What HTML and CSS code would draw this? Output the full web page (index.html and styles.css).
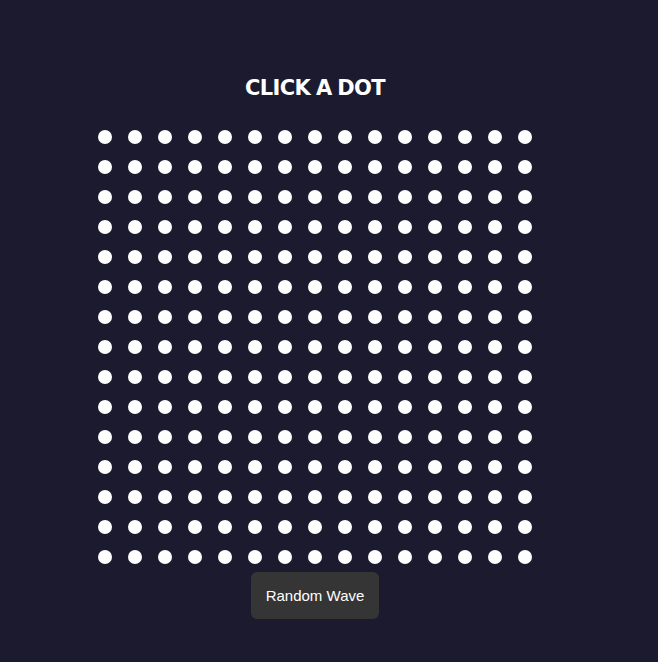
FILE: index.html
```html
<!DOCTYPE html>
<html>
<head>
<meta charset="utf-8">
<link rel="stylesheet" href="styles.css">
</head>
<body>
<main class="app">
<h1 class="title">CLICK A DOT</h1>
<div class="grid">
<i></i><i></i><i></i><i></i><i></i><i></i><i></i><i></i><i></i><i></i><i></i><i></i><i></i><i></i><i></i>
<i></i><i></i><i></i><i></i><i></i><i></i><i></i><i></i><i></i><i></i><i></i><i></i><i></i><i></i><i></i>
<i></i><i></i><i></i><i></i><i></i><i></i><i></i><i></i><i></i><i></i><i></i><i></i><i></i><i></i><i></i>
<i></i><i></i><i></i><i></i><i></i><i></i><i></i><i></i><i></i><i></i><i></i><i></i><i></i><i></i><i></i>
<i></i><i></i><i></i><i></i><i></i><i></i><i></i><i></i><i></i><i></i><i></i><i></i><i></i><i></i><i></i>
<i></i><i></i><i></i><i></i><i></i><i></i><i></i><i></i><i></i><i></i><i></i><i></i><i></i><i></i><i></i>
<i></i><i></i><i></i><i></i><i></i><i></i><i></i><i></i><i></i><i></i><i></i><i></i><i></i><i></i><i></i>
<i></i><i></i><i></i><i></i><i></i><i></i><i></i><i></i><i></i><i></i><i></i><i></i><i></i><i></i><i></i>
<i></i><i></i><i></i><i></i><i></i><i></i><i></i><i></i><i></i><i></i><i></i><i></i><i></i><i></i><i></i>
<i></i><i></i><i></i><i></i><i></i><i></i><i></i><i></i><i></i><i></i><i></i><i></i><i></i><i></i><i></i>
<i></i><i></i><i></i><i></i><i></i><i></i><i></i><i></i><i></i><i></i><i></i><i></i><i></i><i></i><i></i>
<i></i><i></i><i></i><i></i><i></i><i></i><i></i><i></i><i></i><i></i><i></i><i></i><i></i><i></i><i></i>
<i></i><i></i><i></i><i></i><i></i><i></i><i></i><i></i><i></i><i></i><i></i><i></i><i></i><i></i><i></i>
<i></i><i></i><i></i><i></i><i></i><i></i><i></i><i></i><i></i><i></i><i></i><i></i><i></i><i></i><i></i>
<i></i><i></i><i></i><i></i><i></i><i></i><i></i><i></i><i></i><i></i><i></i><i></i><i></i><i></i><i></i>
</div>
<button class="wave">Random Wave</button>
</main>
</body>
</html>
```
FILE: styles.css
```css
html, body {
  margin: 0;
  padding: 0;
  background: #1b1a2e;
  height: 100%;
}
.app {
  width: 630px;
  display: flex;
  flex-direction: column;
  align-items: center;
  padding-top: 75px;
}
.title {
  margin: 0 0 21px;
  font-family: "DejaVu Sans", sans-serif;
  font-weight: 700;
  font-size: 21px;
  line-height: 26px;
  letter-spacing: -0.6px;
  word-spacing: -1px;
  color: #ffffff;
}
.grid {
  display: grid;
  grid-template-columns: repeat(15, 14px);
  grid-auto-rows: 14px;
  gap: 16px;
  padding: 8px;
}
.grid i {
  display: block;
  width: 14px;
  height: 14px;
  border-radius: 50%;
  background: #ffffff;
}
.wave {
  width: 128px;
  height: 47px;
  border: none;
  border-radius: 6px;
  background: #353535;
  color: #ffffff;
  font-family: "Liberation Sans", Arial, sans-serif;
  font-size: 15px;
  padding: 0;
}
```
